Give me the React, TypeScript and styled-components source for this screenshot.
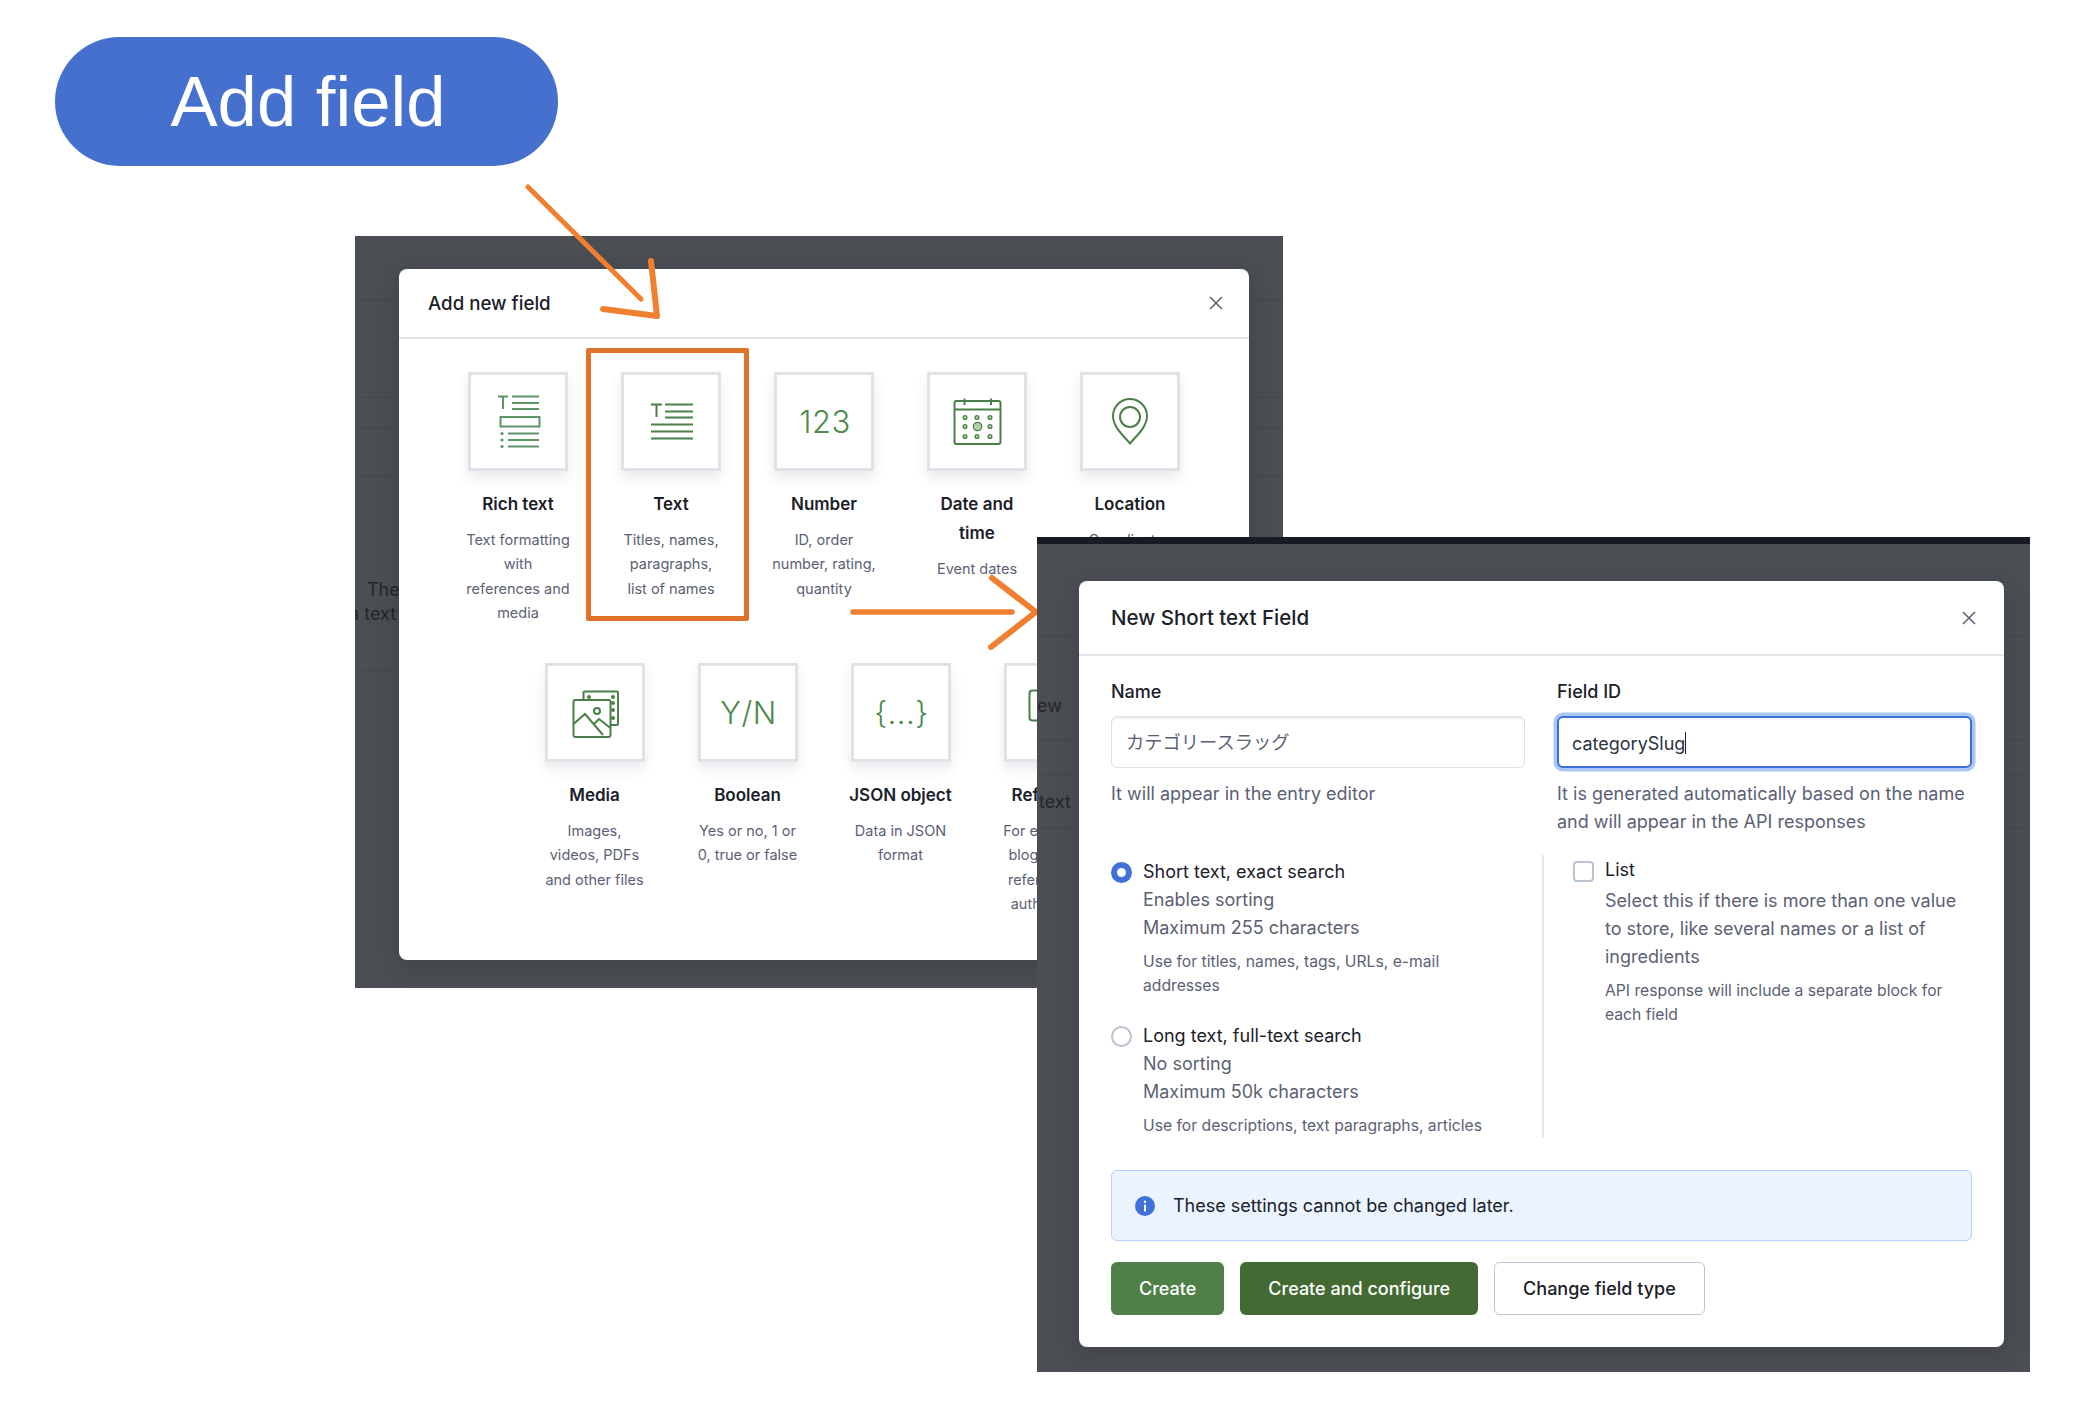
import styled, { createGlobalStyle } from 'styled-components';

const GlobalStyle = createGlobalStyle`
  html,
  body {
    margin: 0;
    padding: 0;
    background: #fff;
  }
`;

const Canvas = styled.div`
  position: relative;
  width: 2078px;
  height: 1412px;
  overflow: hidden;
  background: #fff;
  color: #1b2029;
  font-family: Inter, 'Noto Sans CJK JP', sans-serif;
`;

const AddFieldPill = styled.div`
  position: absolute;
  left: 55px;
  top: 37px;
  display: flex;
  align-items: center;
  justify-content: center;
  box-sizing: border-box;
  width: 503px;
  height: 129px;
  padding-left: 3px;
  border-radius: 65px;
  background: #4570ce;
  color: #fff;
  font-family: 'Liberation Sans', sans-serif;
  font-size: 70.7px;
`;

const Backdrop = styled.div`
  box-sizing: border-box;
  overflow: hidden;
  background: #4b4e53;
`;

const PickerWindow = styled(Backdrop)`
  position: absolute;
  left: 355px;
  top: 236px;
  width: 928px;
  height: 752px;
  padding: 33px 34px 28px 44px;
`;

const SettingsWindow = styled(Backdrop)`
  position: absolute;
  left: 1037px;
  top: 537px;
  width: 993px;
  height: 835px;
  padding: 37px 26px 25px 42px;
  border-top: 7px solid #161b25;
`;

const PageLine = styled.div<{ $top: number }>`
  position: absolute;
  top: ${({ $top }) => $top}px;
  left: 0;
  width: 100%;
  height: 1px;
  background: #44474c;
`;

const PageText = styled.span<{ $left: number; $top: number }>`
  position: absolute;
  top: ${({ $top }) => $top}px;
  left: ${({ $left }) => $left}px;
  color: #23262c;
  font-size: 18px;
  line-height: 24px;
  white-space: nowrap;
`;

const Modal = styled.div`
  position: relative;
  box-sizing: border-box;
  height: 100%;
  border-radius: 8px;
  background: #fff;
  box-shadow: 0 6px 24px rgba(20, 24, 32, 0.2);
`;

const PickerModal = styled(Modal)`
  overflow: hidden;
`;

const Header = styled.div<{ $height: number; $inset: number }>`
  display: flex;
  align-items: center;
  justify-content: space-between;
  box-sizing: border-box;
  height: ${({ $height }) => $height}px;
  padding: 0 ${({ $inset }) => $inset}px 0 ${({ $height }) => ($height > 72 ? 32 : 29)}px;
  border-bottom: 2px solid #e1e5ea;
`;

const PickerTitle = styled.div`
  font-size: 18.7px;
  font-weight: 500;
`;

const SettingsTitle = styled.div`
  font-size: 20.5px;
  font-weight: 500;
`;

const CloseIcon = styled.svg`
  display: block;
  width: 14px;
  height: 14px;
  stroke: #596072;
  stroke-width: 1.5;
  fill: none;
`;

const TypeGrid = styled.div`
  display: flex;
  flex-wrap: wrap;
  justify-content: center;
  row-gap: 38px;
  padding: 33px 34px 0;
`;

const TypeItem = styled.div`
  display: flex;
  flex-direction: column;
  align-items: center;
  width: 153px;
  text-align: center;
`;

const TypeCard = styled.div`
  display: flex;
  align-items: center;
  justify-content: center;
  box-sizing: border-box;
  width: 100px;
  height: 99px;
  border: 3px solid #dfe3e8;
  background: #fff;
  box-shadow: 0 7px 12px rgba(40, 50, 70, 0.1);
`;

const TypeGlyph = styled.span`
  padding-left: 2px;
  color: #4f8a4c;
  font-size: 31px;
  font-weight: 300;
  letter-spacing: 0.5px;
  line-height: 1;
`;

const TypeIcon = styled.svg<{ $pale?: boolean }>`
  display: block;
  flex-shrink: 0;
  width: 60px;
  height: 60px;
  stroke: ${({ $pale }) => ($pale ? '#5f9468' : '#4a7f47')};
  stroke-width: 2;
  fill: none;
`;

const TypeName = styled.div`
  margin-top: 19px;
  font-size: 17px;
  font-weight: 600;
  line-height: 29px;
`;

const TypeDescription = styled.div`
  margin-top: 9px;
  color: #5b6174;
  font-size: 14.5px;
  line-height: 24.3px;
  white-space: nowrap;

  span {
    display: block;
  }
`;

const HighlightBox = styled.div`
  position: absolute;
  left: 586px;
  top: 348px;
  box-sizing: border-box;
  width: 163px;
  height: 273px;
  border: 5px solid #e0732c;
  border-radius: 2px;
`;

const ArrowLayer = styled.svg`
  position: absolute;
  left: 0;
  top: 0;
  width: 2078px;
  height: 1412px;
  fill: none;
  stroke: #f07f2f;
  stroke-linecap: round;
  stroke-linejoin: round;
  pointer-events: none;
`;

const FormBody = styled.div`
  padding: 24px 32px 32px;
`;

const NameRow = styled.div`
  display: grid;
  grid-template-columns: 414px 415px;
  column-gap: 32px;
  min-height: 156px;
`;

const FieldLabel = styled.div`
  margin-bottom: 12px;
  font-size: 18px;
  font-weight: 500;
  line-height: 24px;
`;

const InputBox = styled.div<{ $focused?: boolean }>`
  display: flex;
  align-items: center;
  box-sizing: border-box;
  height: 52px;
  padding: 0 14px;
  border: ${({ $focused }) => ($focused ? '2px solid #3e6fd6' : '1.5px solid #dcdfe5')};
  border-radius: 6px;
  background: #fff;
  box-shadow: ${({ $focused }) => ($focused ? '0 0 0 3.5px #a9c7f6' : 'inset 0 2px 0 #eef0f3')};
  color: ${({ $focused }) => ($focused ? '#2c3240' : '#5b6174')};
  font-size: 18px;
`;

const NameValue = styled.span`
  padding-bottom: 3px;
  font-size: 18.3px;
`;

const SlugValue = styled.span`
  margin-left: -1px;
  padding-top: 2px;
`;

const Caret = styled.span`
  display: inline-block;
  width: 1px;
  height: 22px;
  margin-top: 2px;
  background: #1b2029;
`;

const Helper = styled.div`
  margin-top: 12px;
  color: #5b6174;
  font-size: 18px;
  line-height: 28px;
`;

const OptionsRow = styled.div`
  display: flex;
  margin-top: 19px;
`;

const OptionsColumn = styled.div`
  box-sizing: border-box;
  width: 431px;
  padding-top: 3px;
`;

const ListColumn = styled.div`
  box-sizing: border-box;
  width: 430px;
  padding: 1px 0 0 29px;
  border-left: 2px solid #e3e7ec;
`;

const Option = styled.div`
  display: flex;
  align-items: flex-start;
  column-gap: 11px;

  & + & {
    margin-top: 24px;
  }
`;

const Radio = styled.span<{ $checked?: boolean }>`
  flex-shrink: 0;
  box-sizing: border-box;
  width: 21px;
  height: 21px;
  margin-top: 4px;
  border: ${({ $checked }) => ($checked ? '6.5px solid #3f71d8' : '2.5px solid #b8c2d0')};
  border-radius: 50%;
  background: #fff;
`;

const Checkbox = styled.span`
  flex-shrink: 0;
  box-sizing: border-box;
  width: 21px;
  height: 21px;
  margin-top: 5px;
  border: 2.5px solid #b8c3d2;
  border-radius: 4px;
  background: #fff;
`;

const OptionLabel = styled.div`
  font-size: 18px;
  line-height: 28px;
`;

const OptionText = styled.div<{ $gap?: number }>`
  margin-top: ${({ $gap }) => $gap ?? 0}px;
  color: #5b6174;
  font-size: 18px;
  line-height: 28px;
`;

const OptionHint = styled.div`
  max-width: 355px;
  margin-top: 8px;
  color: #5b6174;
  font-size: 15.7px;
  line-height: 24px;
`;

const Notice = styled.div`
  display: flex;
  align-items: center;
  column-gap: 18px;
  box-sizing: border-box;
  height: 71px;
  margin-top: 32px;
  padding-left: 23px;
  border: 1.5px solid #b7d1f8;
  border-radius: 6px;
  background: #eaf3fe;
  font-size: 18px;
`;

const NoticeIcon = styled.svg`
  display: block;
  width: 20px;
  height: 20px;
`;

const Actions = styled.div`
  display: flex;
  column-gap: 16px;
  margin-top: 21px;
`;

const ActionButton = styled.button<{ $tone: 'primary' | 'dark' | 'plain' }>`
  box-sizing: border-box;
  height: 53px;
  padding: 0 28px;
  border: ${({ $tone }) => ($tone === 'plain' ? '1.5px solid #bdc5d4' : '0')};
  border-radius: 6px;
  background: ${({ $tone }) =>
    $tone === 'primary' ? '#4f8047' : $tone === 'dark' ? '#426a32' : '#fff'};
  color: ${({ $tone }) => ($tone === 'plain' ? '#1b2029' : '#fff')};
  font-family: inherit;
  font-size: 18px;
  font-weight: 500;
`;

const Close = () => (
  <CloseIcon viewBox="0 0 14 14">
    <path d="M1 1l12 12M13 1L1 13" />
  </CloseIcon>
);

const RichTextIcon = () => (
  <TypeIcon viewBox="0 0 60 60" $pale>
    <path d="M10 4.5h10M15 4.5V17M24 4.5h27M24 11h27M24 17h27" />
    <rect x="12.5" y="25" width="39" height="9.5" />
    <path d="M20 41.5h31M20 48h31M20 54.5h31" />
    <circle cx="14" cy="41.5" r="1.6" fill="#5f9468" stroke="none" />
    <circle cx="14" cy="48" r="1.6" fill="#5f9468" stroke="none" />
    <circle cx="14" cy="54.5" r="1.6" fill="#5f9468" stroke="none" />
  </TypeIcon>
);

const TextIcon = () => (
  <TypeIcon viewBox="0 0 60 60">
    <path d="M10 12.5h11M15.5 12.5V25M24 12.5h28M24 19.5h28M24 25.5h28M10 32.5h42M10 39.5h42M10 46.5h42" />
  </TypeIcon>
);

const calendarDots = [
  [18, 25.5],
  [30, 25.5],
  [43, 25.5],
  [18, 34.5],
  [43, 34.5],
  [18, 44.5],
  [30, 44.5],
  [43, 44.5],
];

const CalendarIcon = () => (
  <TypeIcon viewBox="0 0 60 60">
    <rect x="7.5" y="9" width="46" height="43" rx="2" />
    <path d="M7.5 17.5h46M17.5 6.5V13M44 6.5V13" />
    {calendarDots.map(([cx, cy]) => (
      <circle key={`${cx}-${cy}`} cx={cx} cy={cy} r="1.9" fill="#b3d3a6" strokeWidth="1.3" />
    ))}
    <circle cx="30.5" cy="34.5" r="4.2" fill="#b3d3a6" strokeWidth="1.3" />
  </TypeIcon>
);

const PinIcon = () => (
  <TypeIcon viewBox="0 0 60 60">
    <path d="M30 51.5C26 46 13 36 13 24a17 17 0 0 1 34 0C47 36 34 46 30 51.5Z" />
    <circle cx="30" cy="25" r="10" />
  </TypeIcon>
);

const MediaIcon = () => (
  <TypeIcon viewBox="0 0 60 60">
    <rect x="8.5" y="17" width="37" height="37" rx="2" />
    <path d="M18.5 17V9.5a1 1 0 0 1 1-1H52a1 1 0 0 1 1 1V41a1 1 0 0 1-1 1h-6.5" />
    <path d="M8.5 41L20 31l18 21M29 41l5-5 11.5 9" />
    <circle cx="32" cy="28" r="3" />
    {[
      [24, 14],
      [48, 14],
      [48, 20],
      [48, 27],
      [48, 35],
    ].map(([cx, cy]) => (
      <circle key={cy + cx} cx={cx} cy={cy} r="2" fill="#4a7f47" stroke="none" />
    ))}
  </TypeIcon>
);

const ReferenceIcon = () => (
  <TypeIcon viewBox="0 0 60 60">
    <rect x="5.5" y="7.5" width="30" height="30" rx="3" />
    <path d="M24 22h30M44 12l10 10-10 10" />
  </TypeIcon>
);

const fieldTypes = [
  { name: ['Rich text'], lines: ['Text formatting', 'with', 'references and', 'media'], icon: <RichTextIcon /> },
  { name: ['Text'], lines: ['Titles, names,', 'paragraphs,', 'list of names'], icon: <TextIcon /> },
  { name: ['Number'], lines: ['ID, order', 'number, rating,', 'quantity'], icon: <TypeGlyph>123</TypeGlyph> },
  { name: ['Date and', 'time'], lines: ['Event dates'], icon: <CalendarIcon /> },
  { name: ['Location'], lines: ['Coordinates'], icon: <PinIcon /> },
  { name: ['Media'], lines: ['Images,', 'videos, PDFs', 'and other files'], icon: <MediaIcon /> },
  { name: ['Boolean'], lines: ['Yes or no, 1 or', '0, true or false'], icon: <TypeGlyph>Y/N</TypeGlyph> },
  { name: ['JSON object'], lines: ['Data in JSON', 'format'], icon: <TypeGlyph>{'{...}'}</TypeGlyph> },
  { name: ['Reference'], lines: ['For example, a', 'blog authors,', 'references to', 'authors, etc.'], icon: <ReferenceIcon /> },
];

export default function App() {
  return (
    <Canvas>
      <GlobalStyle />
      <AddFieldPill>Add field</AddFieldPill>

      <PickerWindow>
        <PageLine $top={64} />
        <PageLine $top={161} />
        <PageLine $top={191} />
        <PageLine $top={239} />
        <PageLine $top={434} />
        <PageText $left={12} $top={342}>The</PageText>
        <PageText $left={-6} $top={366}>a text</PageText>
        <PickerModal>
          <Header $height={70} $inset={26}>
            <PickerTitle>Add new field</PickerTitle>
            <Close />
          </Header>
          <TypeGrid>
            {fieldTypes.map((type) => (
              <TypeItem key={type.name[0]}>
                <TypeCard>{type.icon}</TypeCard>
                <TypeName>
                  {type.name.map((part) => (
                    <div key={part}>{part}</div>
                  ))}
                </TypeName>
                <TypeDescription>
                  {type.lines.map((line) => (
                    <span key={line}>{line}</span>
                  ))}
                </TypeDescription>
              </TypeItem>
            ))}
          </TypeGrid>
        </PickerModal>
      </PickerWindow>

      <HighlightBox />

      <ArrowLayer viewBox="0 0 2078 1412">
        <path d="M528 187L641 299" strokeWidth="5" />
        <path d="M651 261L657 316L603 309" strokeWidth="6" />
        <path d="M853 612H1012" strokeWidth="5.5" />
        <path d="M992 578L1036 612L991 647" strokeWidth="6" />
      </ArrowLayer>

      <SettingsWindow>
        <PageLine $top={92} />
        <PageLine $top={195} />
        <PageLine $top={230} />
        <PageLine $top={284} />
        <PageText $left={0} $top={150}>ew</PageText>
        <PageText $left={2} $top={246}>text</PageText>
        <Modal>
          <Header $height={75} $inset={28}>
            <SettingsTitle>New Short text Field</SettingsTitle>
            <Close />
          </Header>
          <FormBody>
            <NameRow>
              <div>
                <FieldLabel>Name</FieldLabel>
                <InputBox>
                  <NameValue>カテゴリースラッグ</NameValue>
                </InputBox>
                <Helper>It will appear in the entry editor</Helper>
              </div>
              <div>
                <FieldLabel>Field ID</FieldLabel>
                <InputBox $focused>
                  <SlugValue>categorySlug</SlugValue>
                  <Caret />
                </InputBox>
                <Helper>It is generated automatically based on the name and will appear in the API responses</Helper>
              </div>
            </NameRow>

            <OptionsRow>
              <OptionsColumn>
                <Option>
                  <Radio $checked />
                  <div>
                    <OptionLabel>Short text, exact search</OptionLabel>
                    <OptionText>Enables sorting</OptionText>
                    <OptionText>Maximum 255 characters</OptionText>
                    <OptionHint>Use for titles, names, tags, URLs, e-mail addresses</OptionHint>
                  </div>
                </Option>
                <Option>
                  <Radio />
                  <div>
                    <OptionLabel>Long text, full-text search</OptionLabel>
                    <OptionText>No sorting</OptionText>
                    <OptionText>Maximum 50k characters</OptionText>
                    <OptionHint>Use for descriptions, text paragraphs, articles</OptionHint>
                  </div>
                </Option>
              </OptionsColumn>
              <ListColumn>
                <Option>
                  <Checkbox />
                  <div>
                    <OptionLabel>List</OptionLabel>
                    <OptionText $gap={3}>
                      Select this if there is more than one value to store, like several names or a list of ingredients
                    </OptionText>
                    <OptionHint>API response will include a separate block for each field</OptionHint>
                  </div>
                </Option>
              </ListColumn>
            </OptionsRow>

            <Notice>
              <NoticeIcon viewBox="0 0 20 20">
                <circle cx="10" cy="10" r="10" fill="#3f71d8" />
                <circle cx="10" cy="5.8" r="1.2" fill="#fff" />
                <rect x="9" y="8.4" width="2" height="7" rx="0.6" fill="#fff" />
              </NoticeIcon>
              These settings cannot be changed later.
            </Notice>

            <Actions>
              <ActionButton $tone="primary">Create</ActionButton>
              <ActionButton $tone="dark">Create and configure</ActionButton>
              <ActionButton $tone="plain">Change field type</ActionButton>
            </Actions>
          </FormBody>
        </Modal>
      </SettingsWindow>
    </Canvas>
  );
}
